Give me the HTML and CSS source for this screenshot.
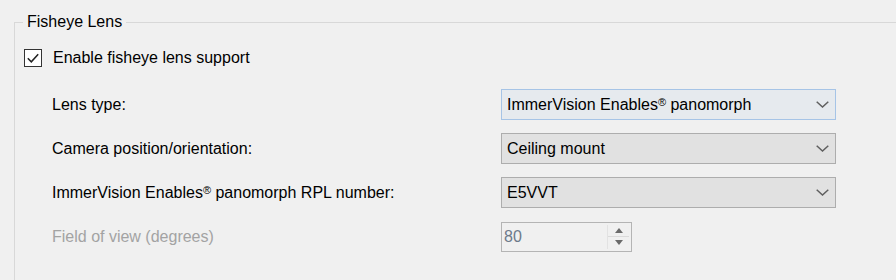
FILE: index.html
```html
<!DOCTYPE html>
<html lang="en">
<head>
<meta charset="utf-8">
<title>Fisheye Lens</title>
<link rel="stylesheet" href="styles.css">
</head>
<body>
<fieldset class="group">
  <legend class="group-title">Fisheye Lens</legend>
  <label class="check-row">
    <span class="checkbox">
      <svg width="14" height="14" viewBox="0 0 14 14"><path d="M1.8 7.2 L5.3 10.8 L12.2 3.2" fill="none" stroke="#222" stroke-width="1.5"/></svg>
    </span>
    <span class="check-text">Enable fisheye lens support</span>
  </label>
  <div class="form-grid">
    <span class="field-label">Lens type:</span>
    <div class="combo combo-focused">
      <span class="combo-text">ImmerVision Enables<sup class="reg">®</sup> panomorph</span>
      <svg class="chevron" width="13" height="7" viewBox="0 0 13 7"><path d="M0.7 0.7 L6.5 6 L12.3 0.7" fill="none" stroke="#5f5f5f" stroke-width="1.5"/></svg>
    </div>

    <span class="field-label">Camera position/orientation:</span>
    <div class="combo">
      <span class="combo-text">Ceiling mount</span>
      <svg class="chevron" width="13" height="7" viewBox="0 0 13 7"><path d="M0.7 0.7 L6.5 6 L12.3 0.7" fill="none" stroke="#5f5f5f" stroke-width="1.5"/></svg>
    </div>

    <span class="field-label">ImmerVision Enables<sup class="reg">®</sup> panomorph RPL number:</span>
    <div class="combo">
      <span class="combo-text">E5VVT</span>
      <svg class="chevron" width="13" height="7" viewBox="0 0 13 7"><path d="M0.7 0.7 L6.5 6 L12.3 0.7" fill="none" stroke="#5f5f5f" stroke-width="1.5"/></svg>
    </div>

    <span class="field-label field-label-disabled">Field of view (degrees)</span>
    <div class="spin">
      <span class="spin-text">80</span>
      <div class="spin-buttons">
        <span class="spin-btn"><svg width="8" height="5" viewBox="0 0 8 5"><path d="M0 5 L4 0 L8 5 Z" fill="#6a6a6a"/></svg></span>
        <span class="spin-btn"><svg width="8" height="5" viewBox="0 0 8 5"><path d="M0 0 L4 5 L8 0 Z" fill="#6a6a6a"/></svg></span>
      </div>
    </div>
  </div>
</fieldset>
</body>
</html>
```
FILE: styles.css
```css
html, body {
  margin: 0;
  padding: 0;
  background: #f0f0f0;
  overflow: hidden;
}
body {
  width: 896px;
  height: 280px;
  font-family: "Liberation Sans", Arial, sans-serif;
  font-size: 16px;
  color: #000;
}
.group {
  margin: 12px -40px 0 14px;
  padding: 0 0 0 8px;
  border: 1px solid #d8d8d8;
  border-right: none;
  border-bottom: none;
  height: 268px;
  box-sizing: border-box;
  min-width: 0;
  overflow: hidden;
}
.group-title {
  padding: 0 4px;
  margin-left: 0;
  line-height: 20px;
  height: 20px;
}
.check-row {
  display: flex;
  align-items: center;
  gap: 11px;
  margin-top: 16px;
  height: 20px;
}
.checkbox {
  width: 18px;
  height: 18px;
  box-sizing: border-box;
  border: 1px solid #333;
  background: #fff;
  display: flex;
  align-items: center;
  justify-content: center;
  margin-left: 1px;
}
.form-grid {
  display: grid;
  grid-template-columns: 449px 335px;
  grid-auto-rows: 31px;
  row-gap: 13px;
  margin: 21px 0 0 29px;
  align-items: center;
}
.field-label {
  line-height: 20px;
}
.field-label-disabled {
  color: #a3a3a3;
}
.reg {
  font-size: 11px;
  vertical-align: 4px;
  line-height: 0;
}
.combo {
  height: 31px;
  box-sizing: border-box;
  border: 1px solid #adadad;
  background: #e1e1e1;
  display: flex;
  align-items: center;
  justify-content: space-between;
  padding: 0 6px 0 5px;
}
.combo-focused {
  border-color: #a6c4e6;
  background: #e6eaee;
}
.spin {
  width: 131px;
  height: 30px;
  box-sizing: border-box;
  border: 1px solid #b4b4b4;
  background: #f0f0f0;
  display: flex;
  align-items: stretch;
  justify-content: space-between;
  padding: 2px 2px 2px 2px;
}
.spin-text {
  align-self: center;
  color: #6d7a8a;
}
.spin-buttons {
  width: 21px;
  display: flex;
  flex-direction: column;
  border-left: 1px solid #e2e2e2;
}
.spin-btn {
  flex: 1;
  display: flex;
  align-items: center;
  justify-content: center;
}
.spin-btn + .spin-btn {
  border-top: 1px solid #dadada;
}
```
